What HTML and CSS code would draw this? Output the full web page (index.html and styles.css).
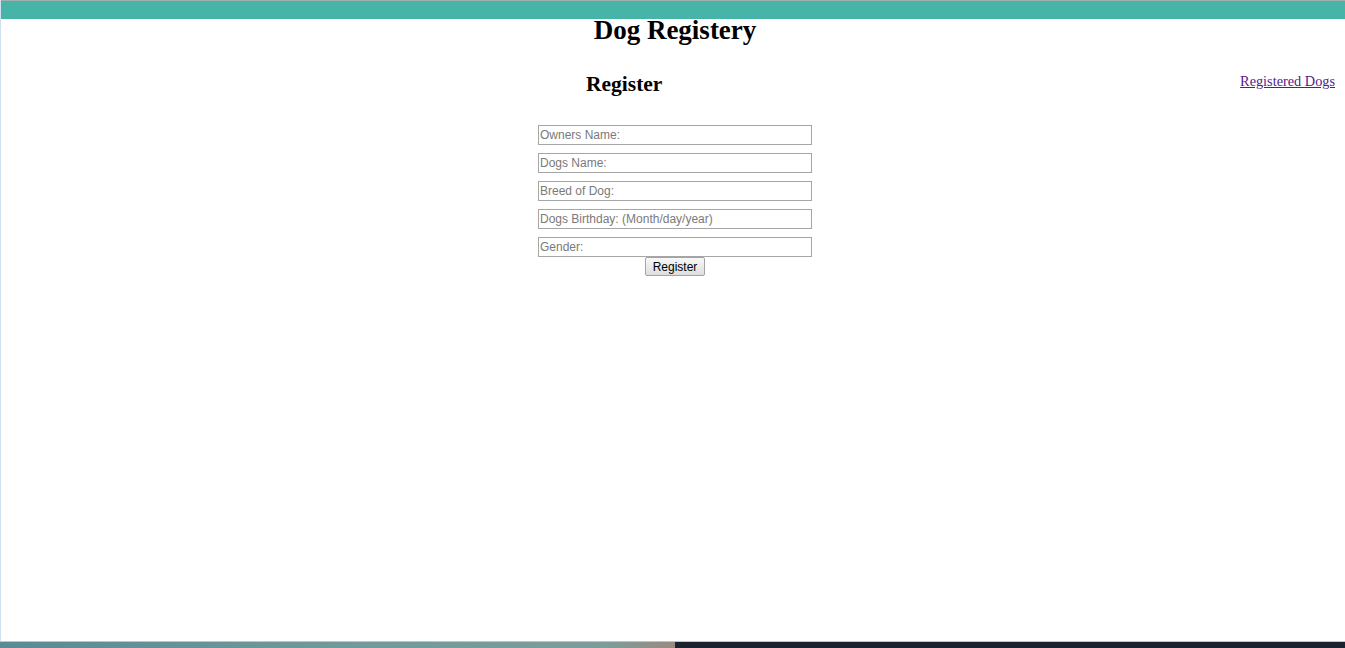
FILE: index.html
```html
<!DOCTYPE html>
<html lang="en">
<head>
<meta charset="utf-8">
<title>Dog Registery</title>
<link rel="stylesheet" href="styles.css">
</head>
<body>
<div class="screen">
  <div class="window">
    <div class="topbar"></div>
    <div class="page">
      <h1 class="title">Dog Registery</h1>
      <div class="main">
        <div class="spacer"></div>
        <div class="center">
          <h2 class="subtitle">Register</h2>
          <form class="form">
            <div class="fields">
              <input class="field" type="text" placeholder="Owners Name:">
              <input class="field" type="text" placeholder="Dogs Name:">
              <input class="field" type="text" placeholder="Breed of Dog:">
              <input class="field" type="text" placeholder="Dogs Birthday: (Month/day/year)">
              <input class="field" type="text" placeholder="Gender:">
            </div>
            <button class="btn" type="button">Register</button>
          </form>
        </div>
        <div class="side">
          <a class="link" href="#">Registered Dogs</a>
        </div>
      </div>
    </div>
  </div>
  <div class="taskbar">
    <div class="tb-left"></div>
    <div class="tb-right"></div>
  </div>
</div>
</body>
</html>
```

FILE: styles.css
```css
* { box-sizing: border-box; }
html, body { margin: 0; padding: 0; background: #fff; }
body { font-family: "Liberation Serif", "Times New Roman", serif; color: #000; }

.screen {
  height: 648px;
  display: flex;
  flex-direction: column;
  overflow: hidden;
}
.window {
  flex: 1;
  border-left: 1px solid #cfe0ee;
  background: #fff;
}
.topbar {
  height: 19px;
  background: #46b5a8;
  border-top: 1px solid #9fb0ae;
}
.page {
  padding-left: 4px;
}
.title {
  margin: 0;
  font-size: 27px;
  line-height: 22px;
  font-weight: bold;
  text-align: center;
}
.main {
  display: grid;
  grid-template-columns: 1fr 274px 1fr;
  padding-top: 31px;
}
.center {
  display: flex;
  flex-direction: column;
}
.subtitle {
  margin: 0 0 29px 48px;
  font-size: 21.5px;
  line-height: 24px;
  font-weight: bold;
}
.form {
  display: flex;
  flex-direction: column;
  align-items: center;
}
.fields {
  display: flex;
  flex-direction: column;
  gap: 8px;
  width: 274px;
}
.field {
  width: 274px;
  height: 20px;
  margin: 0;
  padding: 0 1px;
  border: 1px solid #a6a6a6;
  font-family: "Liberation Sans", Arial, sans-serif;
  font-size: 12px;
  color: #000;
  background: #fff;
}
.field::placeholder { color: #7a7a7a; opacity: 1; }
.btn {
  width: 60px;
  height: 19px;
  margin: 0;
  padding: 0;
  font-family: "Liberation Sans", Arial, sans-serif;
  font-size: 12px;
  color: #000;
  background: linear-gradient(#f8f8f8, #dedede);
  border: 1px solid #a3a3a3;
  border-radius: 2px;
}
.side {
  display: flex;
  justify-content: flex-end;
  align-items: flex-start;
  padding-right: 10px;
}
.link {
  margin-top: 1px;
  font-size: 14.3px;
  line-height: 16px;
  color: #551a8b;
  text-decoration: underline;
}
.taskbar {
  height: 7px;
  display: flex;
  border-top: 1px solid #a9cbe0;
}
.tb-left {
  width: 675px;
  background: linear-gradient(90deg, #5a8a93, #6f9a9c 50%, #7d9c9a 90%, #9a8a80);
}
.tb-right {
  flex: 1;
  background: #1a2430;
}
```
